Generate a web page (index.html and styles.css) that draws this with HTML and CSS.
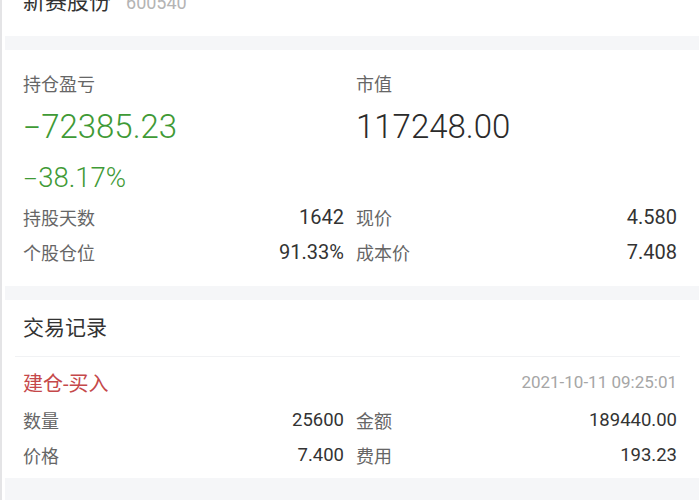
FILE: index.html
```html
<!DOCTYPE html>
<html lang="zh-CN">
<head>
<meta charset="utf-8">
<title>新赛股份 600540</title>
<link rel="stylesheet" href="styles.css">
</head>
<body>
<div class="frame">
  <div class="page">
    <section class="card head-card">
      <div class="title-row">
        <span class="stock-name">新赛股份</span>
        <span class="stock-code">600540</span>
      </div>
    </section>

    <section class="card summary">
      <div class="cell">
        <div class="label">持仓盈亏</div>
        <div class="big green"><span class="sign">-</span>72385.23</div>
        <div class="pct green"><span class="sign">-</span>38.17%</div>
      </div>
      <div class="cell">
        <div class="label">市值</div>
        <div class="big">117248.00</div>
        <div class="pct"></div>
      </div>
      <div class="cell">
        <div class="row"><span class="k">持股天数</span><span class="v">1642</span></div>
        <div class="row"><span class="k">个股仓位</span><span class="v">91.33%</span></div>
      </div>
      <div class="cell">
        <div class="row"><span class="k">现价</span><span class="v">4.580</span></div>
        <div class="row"><span class="k">成本价</span><span class="v">7.408</span></div>
      </div>
    </section>

    <section class="card trades">
      <div class="trades-title">交易记录</div>
      <div class="divider"></div>
      <div class="trade">
        <div class="trade-head">
          <span class="trade-type">建仓-买入</span>
          <span class="trade-time">2021-10-11 09:25:01</span>
        </div>
        <div class="trade-grid">
          <div class="row small"><span class="k">数量</span><span class="v">25600</span></div>
          <div class="row small"><span class="k">金额</span><span class="v">189440.00</span></div>
          <div class="row small"><span class="k">价格</span><span class="v">7.400</span></div>
          <div class="row small"><span class="k">费用</span><span class="v">193.23</span></div>
        </div>
      </div>
    </section>
  </div>
</div>
</body>
</html>
```

FILE: styles.css
```css
* { box-sizing: border-box; }
html, body { margin: 0; padding: 0; }
body {
  font-family: Roboto, "Noto Sans CJK SC", "Noto Sans", sans-serif;
  color: #333;
  background: #fff;
  width: 699px;
  height: 500px;
  overflow: hidden;
}
.frame {
  border-left: 2px solid #e4e4e6;
  padding-left: 3px;
  background: #fff;
  height: 500px;
}
.page {
  background: #f5f6f8;
  height: 500px;
  display: flex;
  flex-direction: column;
  gap: 14px;
}
.card {
  background: #fff;
  padding: 0 22px 0 18px;
}

/* header card */
.head-card {
  height: 36px;
  flex: none;
}
.title-row {
  margin-top: -13px;
  height: 30px;
  line-height: 30px;
  display: flex;
  align-items: baseline;
  gap: 15px;
}
.stock-name { font-size: 22px; color: #333; }
.stock-code { font-size: 18px; color: #b4b4b4; }

/* summary */
.summary {
  display: grid;
  grid-template-columns: 1fr 1fr;
  column-gap: 12px;
  padding-top: 23px;
  padding-bottom: 16px;
}
.label {
  font-size: 18px;
  line-height: 24px;
  color: #666;
}
.big {
  font-size: 33px;
  font-weight: 300;
  line-height: 40px;
  margin-top: 10px;
  color: #2b2b2b;
}
.pct {
  font-size: 27.5px;
  font-weight: 300;
  line-height: 40px;
  height: 40px;
  margin-top: 11px;
}
.green { color: #3f9a36; }
.big.green { color: #3f9a36; }
.sign {
  display: inline-block;
  width: 0.55em;
  text-align: center;
  transform: scaleX(1.7);
}
.row {
  display: flex;
  justify-content: space-between;
  align-items: center;
  height: 35.5px;
}
.row .k { font-size: 18px; color: #666; }
.row .v { font-size: 20px; color: #333; }
.summary .cell:nth-child(3), .summary .cell:nth-child(4) { margin-top: 1px; }

/* trades */
.trades {
  padding-left: 0;
  padding-right: 0;
  padding-bottom: 6px;
}
.trades-title {
  height: 56px;
  line-height: 56px;
  font-size: 21px;
  color: #333;
  padding-left: 18px;
}
.divider {
  height: 1px;
  background: #f1f2f4;
  margin: 0 19px 0 10px;
}
.trade {
  padding: 5px 22px 0 18px;
}
.trade-head {
  display: flex;
  justify-content: space-between;
  align-items: center;
  height: 40px;
}
.trade-type { font-size: 20px; color: #c5484a; }
.trade-time { font-size: 17px; color: #a6a6a6; }
.trade-grid {
  display: grid;
  grid-template-columns: 1fr 1fr;
  column-gap: 12px;
}
.row.small { height: 35px; }
.row.small .v { font-size: 18.5px; }
```
